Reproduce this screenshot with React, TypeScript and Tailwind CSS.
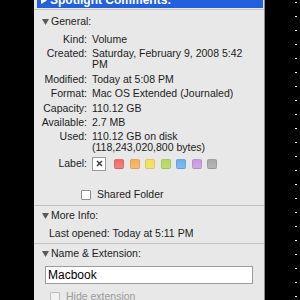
import React from 'react';

const font = { fontFamily: '"Liberation Sans", Arial, sans-serif' };

const Tri = ({ color = '#5a5a5a' }: { color?: string }) => (
  <svg width="7" height="6" viewBox="0 0 7 6" className="shrink-0">
    <polygon points="0,0 7,0 3.5,6" fill={color} />
  </svg>
);

const Row = ({ label, lines }: { label: string; lines: string[] }) => (
  <div className="flex leading-[11px]">
    <div className="w-[58px] shrink-0 text-right pr-[5px]">{label}</div>
    <div className="flex-1 flex flex-col">
      {lines.map((l) => (
        <div key={l} className="whitespace-nowrap">{l}</div>
      ))}
    </div>
  </div>
);

const labelColors = ['#f06a66', '#f7b056', '#f3df57', '#b6d95a', '#6aaef5', '#c89ae0', '#a8a8a8'];

const App = () => {
  const ticks = Array.from({ length: 22 });
  return (
    <div className="w-[300px] h-[300px] bg-black flex overflow-hidden" style={font}>
      <div className="w-[34px] shrink-0" />
      {/* info panel */}
      <div className="w-[231px] shrink-0 h-[300px] bg-[#e8e8e8] border-r border-[#8a8a8a] flex flex-col text-[10.5px] text-[#1c1c1c]">
        <div className="mt-[-8px] h-[16px] shrink-0 ml-[3px] mr-[1px] bg-[#2360dd] flex items-center gap-[3px] pl-[4px] text-white font-bold text-[12px]">
          <svg width="6" height="7" viewBox="0 0 6 7"><polygon points="0,0 6,3.5 0,7" fill="#fff" /></svg>
          <span>Spotlight Comments:</span>
        </div>
        <div className="h-[1px] shrink-0 bg-[#c4c4c4] mt-[1px]" />

        <div className="flex items-center gap-[2px] pl-[8px] mt-[5px] h-[14px] shrink-0">
          <Tri />
          <span>General:</span>
        </div>

        <div className="flex flex-col gap-[3.4px] mt-[5px]">
          <Row label="Kind:" lines={['Volume']} />
          <Row label="Created:" lines={['Saturday, February 9, 2008 5:42', 'PM']} />
          <Row label="Modified:" lines={['Today at 5:08 PM']} />
          <Row label="Format:" lines={['Mac OS Extended (Journaled)']} />
          <Row label="Capacity:" lines={['110.12 GB']} />
          <Row label="Available:" lines={['2.7 MB']} />
          <Row label="Used:" lines={['110.12 GB on disk', '(118,243,020,800 bytes)']} />
        </div>

        <div className="flex items-center mt-[3px] h-[15px] shrink-0">
          <div className="w-[58px] pr-[5px] text-right">Label:</div>
          <div className="w-[14px] h-[14px] bg-white border border-[#9a9a9a] flex items-center justify-center">
            <svg width="7" height="7" viewBox="0 0 7 7">
              <path d="M1 1 L6 6 M6 1 L1 6" stroke="#444" strokeWidth="1.5" />
            </svg>
          </div>
          <div className="flex gap-[5.5px] ml-[8px]">
            {labelColors.map((c) => (
              <div
                key={c}
                className="w-[10px] h-[10px] rounded-[2px] border border-black/10"
                style={{ background: `linear-gradient(${c}, ${c}cc)` }}
              />
            ))}
          </div>
        </div>

        <div className="flex items-center gap-[6px] ml-[47px] mt-[18px] h-[12px] shrink-0">
          <div className="w-[10px] h-[10px] bg-white border border-[#8e8e8e] rounded-[1px]" />
          <span>Shared Folder</span>
        </div>

        <div className="h-[1px] shrink-0 bg-[#c2c2c2] mt-[4px]" />
        <div className="flex items-center gap-[2px] pl-[8px] mt-[3px] h-[14px] shrink-0">
          <Tri />
          <span>More Info:</span>
        </div>
        <div className="pl-[15px] mt-[3px] h-[14px] leading-[14px] shrink-0">Last opened: Today at 5:11 PM</div>

        <div className="h-[1px] shrink-0 bg-[#c2c2c2] mt-[3px]" />
        <div className="flex items-center gap-[2px] pl-[8px] mt-[3px] h-[14px] shrink-0">
          <Tri />
          <span>Name &amp; Extension:</span>
        </div>
        <div className="mx-[11px] mt-[5px] h-[18px] shrink-0 bg-white border border-[#9c9c9c] flex items-center pl-[2px] text-[12px] text-black">
          Macbook
        </div>
        <div className="flex items-center gap-[6px] ml-[16px] mt-[7px] h-[12px] shrink-0 text-[#9a9a9a]">
          <div className="w-[10px] h-[10px] bg-[#f2f2f2] border border-[#bdbdbd] rounded-[1px]" />
          <span>Hide extension</span>
        </div>
      </div>
      {/* ruler ticks */}
      <div className="flex-1 flex flex-col gap-[13px] pt-[2px] pl-[30px]">
        {ticks.map((_, i) => (
          <div key={i} className="w-[2px] h-[1px] bg-white shrink-0" />
        ))}
      </div>
    </div>
  );
};

export default App;
